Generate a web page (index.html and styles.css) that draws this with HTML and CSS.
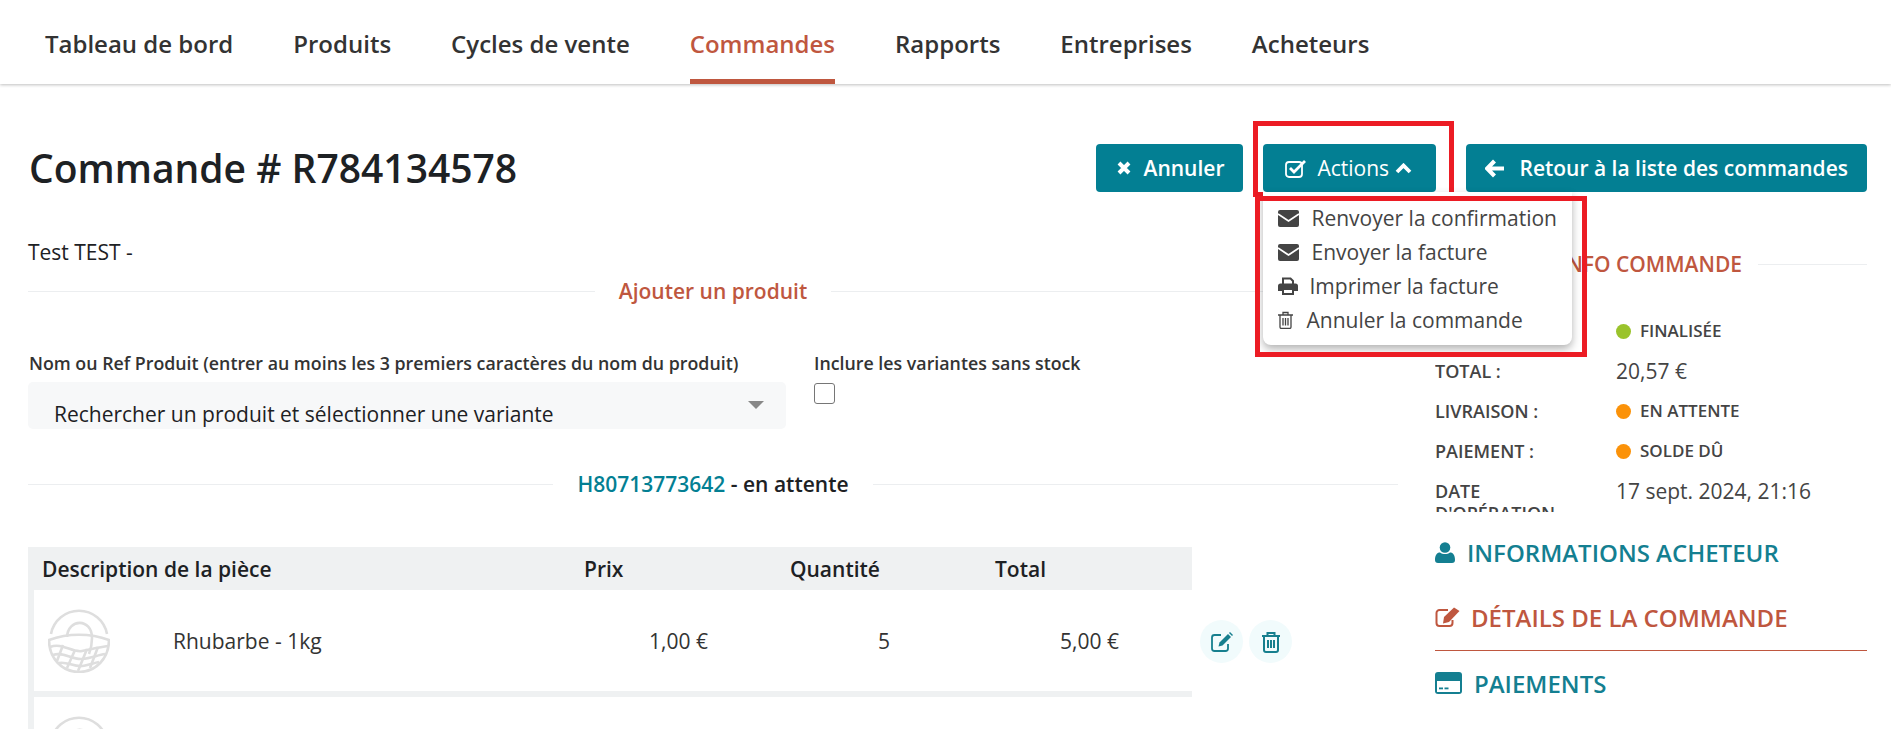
FILE: index.html
```html
<!DOCTYPE html>
<html lang="fr">
<head>
    <meta charset="UTF-8">
    <title>Commande # R784134578</title>
    <link rel="stylesheet" href="styles.css">
</head>
<body>
    <nav class="topnav">
        <a href="#">Tableau de bord</a>
        <a href="#">Produits</a>
        <a href="#">Cycles de vente</a>
        <a href="#" class="active">Commandes</a>
        <a href="#">Rapports</a>
        <a href="#">Entreprises</a>
        <a href="#">Acheteurs</a>
    </nav>

    <main class="page">
        <header class="page-head">
            <h1>Commande # R784134578</h1>
            <div class="head-buttons">
                <button class="btn btn-bold btn-cancel">
                    <svg class="ic-times" viewBox="0 0 14 14"><path d="M2 2l10 10M12 2L2 12" stroke="currentColor" stroke-width="4" fill="none"/></svg>
                    Annuler
                </button>
                <div class="actions-wrap">
                    <button class="btn btn-actions">
                        <svg class="ic-check" viewBox="0 0 22 19"><rect x="1" y="3" width="16" height="15" rx="3" fill="none" stroke="currentColor" stroke-width="1.8"/><path d="M5 9l4 4L20 2" fill="none" stroke="currentColor" stroke-width="2.8"/></svg>
                        <span class="actions-label">Actions</span>
                        <svg class="ic-chevron" viewBox="0 0 17 11"><path d="M2 9l6.500-6.500L15 9" fill="none" stroke="currentColor" stroke-width="3.8"/></svg>
                    </button>
                    <div class="mark mark-button"></div>
                    <ul class="menu">
                        <li>
                            <svg class="ic-mail" viewBox="0 0 21 17"><rect width="21" height="17" rx="2" fill="#444"/><path d="M0 4l10.500 7L21 4" fill="none" stroke="#fff" stroke-width="1.800"/></svg>
                            <span class="menu-text">Renvoyer la confirmation</span>
                        </li>
                        <li>
                            <svg class="ic-mail" viewBox="0 0 21 17"><rect width="21" height="17" rx="2" fill="#444"/><path d="M0 4l10.500 7L21 4" fill="none" stroke="#fff" stroke-width="1.800"/></svg>
                            <span class="menu-text">Envoyer la facture</span>
                        </li>
                        <li>
                            <svg class="ic-print" viewBox="0 0 20 18"><path d="M5 7V1.500h7.500L15 4v3" fill="none" stroke="#444" stroke-width="2"/><path d="M2.500 6.500h15A2.500 2.500 0 0 1 20 9v5h-4v-3H4v3H0V9a2.500 2.500 0 0 1 2.500-2.500z" fill="#444"/><rect x="5" y="12" width="10" height="5" fill="none" stroke="#444" stroke-width="2"/></svg>
                            <span class="menu-text menu-text-print">Imprimer la facture</span>
                        </li>
                        <li>
                            <svg class="ic-trash-small" viewBox="0 0 15 18"><path d="M0 4h15M5 4V1.500h5V4M2 4v12a1.500 1.500 0 0 0 1.500 1.500h8A1.500 1.500 0 0 0 13 16V4M5 7v7.500M7.500 7v7.500M10 7v7.500" fill="none" stroke="#444" stroke-width="1.300"/></svg>
                            <span class="menu-text menu-text-cancel">Annuler la commande</span>
                        </li>
                    </ul>
                    <div class="mark mark-menu"></div>
                </div>
                <button class="btn btn-bold btn-back">
                    <svg class="ic-arrow" viewBox="0 0 18 18"><path d="M9 2L2 9l7 7M3 9h15" fill="none" stroke="currentColor" stroke-width="4"/></svg>
                    Retour à la liste des commandes
                </button>
            </div>
        </header>

        <div class="columns">
            <section class="col-left">
                <p class="customer">Test TEST -</p>
                <div class="divider divider-add"><span class="accent">Ajouter un produit</span></div>

                <div class="add-form">
                    <div class="field-product">
                        <label>Nom ou Ref Produit (entrer au moins les 3 premiers caractères du nom du produit)</label>
                        <div class="select-box">
                            <span>Rechercher un produit et sélectionner une variante</span>
                            <i class="select-arrow"></i>
                        </div>
                    </div>
                    <div class="field-stock">
                        <label>Inclure les variantes sans stock</label>
                        <i class="checkbox"></i>
                    </div>
                </div>

                <div class="divider divider-ship">
                    <span class="shipment"><a href="#">H80713773642</a> - en attente</span>
                </div>

                <div class="items">
                    <div class="items-head">
                        <span>Description de la pièce</span>
                        <span>Prix</span>
                        <span>Quantité</span>
                        <span>Total</span>
                    </div>
                    <div class="line">
                        <div class="line-cells">
                            <div class="line-row">
                                <svg class="basket" viewBox="0 0 62 65"><use href="#basket-art"/></svg>
                                <span>Rhubarbe - 1kg</span>
                                <span class="num">1,00 €</span>
                                <span class="num">5</span>
                                <span class="num">5,00 €</span>
                            </div>
                        </div>
                        <div class="line-actions">
                            <a class="round-btn" href="#">
                                <svg viewBox="0 0 24 22"><path d="M11 4H4.500A2.500 2.500 0 0 0 2 6.500v11A2.500 2.500 0 0 0 4.500 20h11a2.500 2.500 0 0 0 2.500-2.500V13" fill="none" stroke="#167f8e" stroke-width="1.800"/><path d="M9.500 11.500l8.500-8.500 3 3-8.500 8.500-4 1z" fill="#167f8e"/><path d="M19 2l1-1 3 3-1 1z" fill="#167f8e"/></svg>
                            </a>
                            <a class="round-btn" href="#">
                                <svg viewBox="0 0 20 22"><path d="M1 5h18M6.500 5V2h7v3M3 5v14a2 2 0 0 0 2 2h10a2 2 0 0 0 2-2V5M7 9v8M10 9v8M13 9v8" fill="none" stroke="#167f8e" stroke-width="2"/></svg>
                            </a>
                        </div>
                    </div>
                    <div class="line">
                        <div class="line-cells">
                            <div class="line-row">
                                <svg class="basket" viewBox="0 0 62 65"><use href="#basket-art"/></svg>
                            </div>
                        </div>
                    </div>
                </div>
            </section>

            <aside class="col-right">
                <div class="divider divider-info"><span class="accent">INFO COMMANDE</span></div>
                <dl class="info">
                    <dt>ÉTAT :</dt>
                    <dd class="status"><i class="dot dot-green"></i>FINALISÉE</dd>
                    <dt>TOTAL :</dt>
                    <dd>20,57 €</dd>
                    <dt>LIVRAISON :</dt>
                    <dd class="status"><i class="dot dot-orange"></i>EN ATTENTE</dd>
                    <dt>PAIEMENT :</dt>
                    <dd class="status"><i class="dot dot-orange"></i>SOLDE DÛ</dd>
                    <dt>DATE D'OPÉRATION :</dt>
                    <dd>17 sept. 2024, 21:16</dd>
                </dl>

                <a class="side-link side-teal" href="#">
                    <svg class="ic-user" viewBox="0 0 20 21"><circle cx="10" cy="5.500" r="5.300" fill="currentColor"/><path d="M0 18c0-5 2-7.500 5-7.500 1.500 1 3 1.500 5 1.500s3.500-.5 5-1.500c3 0 5 2.500 5 7.500 0 2-1 3-3 3H3c-2 0-3-1-3-3z" fill="currentColor"/></svg>
                    INFORMATIONS ACHETEUR
                </a>
                <a class="side-link side-red" href="#">
                    <svg class="ic-edit" viewBox="0 0 25 20"><path d="M13 3H4.500A3 3 0 0 0 1.500 6v10a3 3 0 0 0 3 3h10a3 3 0 0 0 3-3v-3" fill="none" stroke="currentColor" stroke-width="2"/><path d="M9 10l10-9.500 5.500 3.500L14 15l-6 1.500z" fill="currentColor"/></svg>
                    DÉTAILS DE LA COMMANDE
                </a>
                <a class="side-link side-teal side-pay" href="#">
                    <svg class="ic-card" viewBox="0 0 27 22"><rect width="27" height="22" rx="3" fill="currentColor"/><rect x="2" y="9" width="23" height="11" fill="#fff"/><rect x="4" y="15.500" width="4" height="1.800" fill="currentColor"/><rect x="9.500" y="15.500" width="4" height="1.800" fill="currentColor"/></svg>
                    PAIEMENTS
                </a>
            </aside>
        </div>
    </main>

    <svg class="defs" width="0" height="0">
        <defs>
            <g id="basket-art" fill="none" stroke="#dedede" stroke-width="2.600">
                <path d="M3 26A28.500 28.500 0 0 1 59 26"/>
                <path d="M19 29C20 10 44 10 44 30C44 36 43 41 41 46"/>
                <path d="M1 32C20 25 42 25 61 32C61 50 48 64 31 64C14 64 1 50 1 32z"/>
                <path d="M2 39C14 34 24 45 34 43C44 41 52 39 60 38"/>
                <path d="M5 47C15 43 24 52 34 51C43 50 50 47 57 46"/>
                <path d="M11 55C18 53 26 59 34 58C40 57 46 55 51 54"/>
                <path d="M15 37L9 53M27 42L19 60M39 41L30 63M50 39L42 60"/>
            </g>
        </defs>
    </svg>
</body>
</html>
```

FILE: styles.css
```css
html, body {
    height: 729px;
    overflow: hidden;
}
body {
    margin: 0;
    font-family: "Open Sans", sans-serif;
    background-color: white;
    color: #1d2124;
}
a {
    text-decoration: none;
}
.defs {
    position: absolute;
}

/* top navigation */
.topnav {
    height: 84px;
    display: flex;
    gap: 60px;
    padding-left: 45px;
    box-shadow: 0 1px 3px rgba(0,0,0,0.25);
}
.topnav a {
    height: 79px;
    line-height: 88px;
    font-size: 24px;
    font-weight: 600;
    color: #333;
}
.topnav a.active {
    color: #bf573f;
    border-bottom: 5px solid #bf573f;
}

/* page */
.page {
    padding: 60px 24px 0 28px;
}
.page-head {
    display: flex;
    justify-content: space-between;
    align-items: center;
    height: 48px;
}
h1 {
    margin: -2px 0 0 1px;
    font-size: 39px;
    font-weight: 600;
    color: #1d2124;
}
.head-buttons {
    display: flex;
    gap: 20px;
}
.btn {
    height: 48px;
    display: flex;
    align-items: center;
    border: none;
    border-radius: 4px;
    background-color: #037f93;
    color: white;
    font-family: inherit;
    font-size: 21px;
}
.btn-bold {
    font-weight: 600;
    padding: 0 19px;
    gap: 13px;
}
.btn-cancel {
    padding-left: 21px;
}
.btn-back {
    gap: 15px;
    margin-left: 10px;
}
.ic-times {
    width: 14px;
    height: 14px;
}
.ic-arrow {
    width: 19px;
    height: 19px;
}

/* actions dropdown */
.actions-wrap {
    position: relative;
}
.btn-actions {
    width: 173px;
    padding: 0 0 0 22px;
}
.ic-check {
    width: 22px;
    height: 19px;
}
.actions-label {
    margin-left: 10px;
    margin-right: 6px;
}
.ic-chevron {
    width: 17px;
    height: 11px;
}
.menu {
    position: absolute;
    top: 48px;
    left: 0;
    width: 309px;
    height: 153px;
    margin: 0;
    padding: 9px 0 0 15px;
    box-sizing: border-box;
    list-style: none;
    background-color: white;
    border-radius: 0 0 8px 8px;
    box-shadow: 0 4px 8px rgba(0,0,0,0.3);
    color: #444;
    font-size: 21px;
}
.menu li {
    height: 34px;
    line-height: 34px;
    display: flex;
    align-items: center;
}
.ic-mail {
    width: 21px;
    height: 17px;
}
.ic-print {
    width: 20px;
    height: 18px;
}
.ic-trash-small {
    width: 15px;
    height: 18px;
}
.menu-text {
    margin-left: 12px;
}
.menu-text-print {
    margin-left: 11px;
}
.menu-text-cancel {
    margin-left: 13px;
}
.mark {
    position: absolute;
    box-sizing: border-box;
    border: 5px solid #ec1c24;
    pointer-events: none;
}
.mark-button {
    top: -23px;
    left: -10px;
    width: 201px;
    height: 76px;
}
.mark-menu {
    top: 52px;
    left: -8px;
    width: 332px;
    height: 161px;
}

/* columns */
.columns {
    display: flex;
    gap: 37px;
}
.col-left {
    width: 1370px;
    flex-shrink: 0;
}
.col-right {
    width: 432px;
}
.customer {
    margin: 48px 0 0 0;
    font-size: 21px;
    line-height: 24px;
}
.divider {
    display: flex;
    align-items: center;
    gap: 24px;
    font-size: 21px;
}
.divider::before, .divider::after {
    content: "";
    flex: 1;
    height: 1px;
    background-color: #eceef0;
}
.accent {
    color: #bf573f;
    font-weight: 600;
}
.divider-add {
    margin-top: 15px;
    height: 24px;
}
.add-form {
    display: flex;
    margin-top: 49px;
}
label {
    display: block;
    font-size: 17.800px;
    font-weight: 600;
    line-height: 22px;
    color: #333;
}
.field-product {
    width: 786px;
}
.field-product label {
    margin-left: 1px;
}
.select-box {
    width: 758px;
    height: 47px;
    margin-top: 8px;
    box-sizing: border-box;
    padding: 18px 0 0 26px;
    display: flex;
    justify-content: space-between;
    background-color: #f7f8f9;
    border-radius: 5px;
    font-size: 21px;
    line-height: 29px;
    overflow: hidden;
}
.select-arrow {
    width: 0;
    height: 0;
    margin: 1px 22px 0 0;
    border-left: 8px solid transparent;
    border-right: 8px solid transparent;
    border-top: 8px solid #888;
}
.checkbox {
    display: block;
    width: 21px;
    height: 21px;
    margin-top: 9px;
    box-sizing: border-box;
    border: 1.500px solid #767676;
    border-radius: 3px;
}
.divider-ship {
    margin-top: 42px;
    height: 26px;
}
.shipment {
    font-weight: 600;
    color: #1d2124;
}
.shipment a {
    color: #037f93;
}

/* items table */
.items {
    margin-top: 50px;
}
.items-head {
    width: 1164px;
    height: 43px;
    box-sizing: border-box;
    padding-left: 14px;
    display: grid;
    grid-template-columns: 542px 206px 205px 1fr;
    align-items: center;
    background-color: #eff1f2;
    font-size: 21px;
    font-weight: 600;
}
.line {
    display: flex;
    align-items: center;
}
.line-cells {
    width: 1164px;
    box-sizing: border-box;
    padding: 0 0 6px 6px;
    background-color: #eff1f2;
}
.line-row {
    height: 101px;
    display: grid;
    grid-template-columns: 139px 411px 124px 182px 229px;
    align-items: center;
    background-color: white;
    font-size: 21px;
    color: #333;
}
.basket {
    width: 62px;
    height: 65px;
    margin-left: 14px;
}
.num {
    text-align: right;
}
.line-actions {
    display: flex;
    gap: 6px;
    margin: 0 0 4px 8px;
}
.round-btn {
    width: 43px;
    height: 43px;
    display: flex;
    align-items: center;
    justify-content: center;
    border-radius: 50%;
    background-color: #f1fbfc;
}
.round-btn svg {
    width: 24px;
    height: 22px;
}

/* right column */
.divider-info {
    margin-top: 60px;
    height: 24px;
    gap: 16px;
}
.info {
    height: 201px;
    margin: 35px 0 24px 0;
    overflow: hidden;
    display: grid;
    grid-template-columns: 181px 1fr;
    grid-auto-rows: 40px;
    align-items: start;
    color: #444;
}
.info dt {
    width: 125px;
    font-size: 18px;
    font-weight: 600;
    line-height: 22px;
    padding-top: 9px;
}
.info dd {
    margin: 0;
    font-size: 21px;
    line-height: 22px;
    padding-top: 9px;
}
.info dd.status {
    display: flex;
    align-items: center;
    font-size: 17px;
    font-weight: 600;
}
.dot {
    width: 15px;
    height: 15px;
    margin-right: 9px;
    border-radius: 50%;
}
.dot-green {
    background-color: #9ac32c;
}
.dot-orange {
    background-color: #fb9209;
}
.side-link {
    display: flex;
    align-items: center;
    height: 32px;
    font-size: 24px;
    font-weight: 600;
}
.side-teal {
    color: #147f91;
}
.side-red {
    color: #bf573f;
    margin-top: 33px;
    padding-bottom: 17px;
    border-bottom: 1px solid #bf573f;
}
.side-pay {
    margin-top: 16px;
}
.ic-user {
    width: 20px;
    height: 21px;
    margin-right: 12px;
}
.ic-edit {
    width: 25px;
    height: 20px;
    margin-right: 11px;
}
.ic-card {
    width: 27px;
    height: 22px;
    margin-right: 12px;
}
```
